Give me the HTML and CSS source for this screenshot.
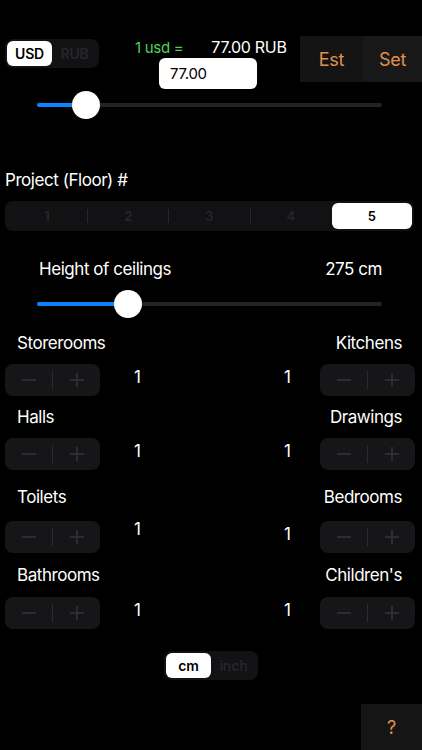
FILE: index.html
```html
<!DOCTYPE html>
<html lang="en">
<head>
    <meta charset="UTF-8">
    <meta name="viewport" content="width=device-width, initial-scale=1.0">
    <title>Repair Estimate</title>
    <link rel="stylesheet" href="styles.css">
</head>
<body>
    <div class="top">
        <div class="seg seg-cur">
            <div class="seg-item active">USD</div>
            <div class="seg-item">RUB</div>
        </div>
        <div class="rate">
            <div class="rate-line"><span class="rate-usd">1 usd =</span><span class="rate-rub">77.00 RUB</span></div>
            <div class="rate-input">77.00</div>
        </div>
        <div class="actions">
            <div class="act act-est">Est</div>
            <div class="act act-set">Set</div>
        </div>
    </div>

    <div class="slider slider-rate">
        <div class="track"><div class="fill" style="width: 49px"></div></div>
        <div class="thumb" style="left: 49px"></div>
    </div>

    <div class="floor-label">Project (Floor) #</div>
    <div class="seg seg-floor">
        <div class="seg-item">1</div>
        <div class="sep"></div>
        <div class="seg-item">2</div>
        <div class="sep"></div>
        <div class="seg-item">3</div>
        <div class="sep"></div>
        <div class="seg-item">4</div>
        <div class="sep sep-hidden"></div>
        <div class="seg-item active">5</div>
    </div>

    <div class="height-row">
        <span>Height of ceilings</span>
        <span>275 cm</span>
    </div>
    <div class="slider slider-height">
        <div class="track"><div class="fill" style="width: 91px"></div></div>
        <div class="thumb" style="left: 91px"></div>
    </div>

    <div class="rooms">
        <div class="room-labels r1"><span>Storerooms</span><span>Kitchens</span></div>
        <div class="room-ctrls c1">
            <div class="group">
                <div class="stepper"><div class="st-btn"><svg width="14" height="14"><line x1="0" y1="7" x2="14" y2="7"/></svg></div><div class="st-div"></div><div class="st-btn"><svg width="14" height="14"><line x1="0" y1="7" x2="14" y2="7"/><line x1="7" y1="0" x2="7" y2="14"/></svg></div></div>
                <div class="val val-l">1</div>
            </div>
            <div class="group">
                <div class="val val-r">1</div>
                <div class="stepper"><div class="st-btn"><svg width="14" height="14"><line x1="0" y1="7" x2="14" y2="7"/></svg></div><div class="st-div"></div><div class="st-btn"><svg width="14" height="14"><line x1="0" y1="7" x2="14" y2="7"/><line x1="7" y1="0" x2="7" y2="14"/></svg></div></div>
            </div>
        </div>

        <div class="room-labels r2"><span>Halls</span><span>Drawings</span></div>
        <div class="room-ctrls c2">
            <div class="group">
                <div class="stepper"><div class="st-btn"><svg width="14" height="14"><line x1="0" y1="7" x2="14" y2="7"/></svg></div><div class="st-div"></div><div class="st-btn"><svg width="14" height="14"><line x1="0" y1="7" x2="14" y2="7"/><line x1="7" y1="0" x2="7" y2="14"/></svg></div></div>
                <div class="val val-l">1</div>
            </div>
            <div class="group">
                <div class="val val-r">1</div>
                <div class="stepper"><div class="st-btn"><svg width="14" height="14"><line x1="0" y1="7" x2="14" y2="7"/></svg></div><div class="st-div"></div><div class="st-btn"><svg width="14" height="14"><line x1="0" y1="7" x2="14" y2="7"/><line x1="7" y1="0" x2="7" y2="14"/></svg></div></div>
            </div>
        </div>

        <div class="room-labels r3"><span>Toilets</span><span>Bedrooms</span></div>
        <div class="room-ctrls c3">
            <div class="group">
                <div class="stepper"><div class="st-btn"><svg width="14" height="14"><line x1="0" y1="7" x2="14" y2="7"/></svg></div><div class="st-div"></div><div class="st-btn"><svg width="14" height="14"><line x1="0" y1="7" x2="14" y2="7"/><line x1="7" y1="0" x2="7" y2="14"/></svg></div></div>
                <div class="val val-l val-high">1</div>
            </div>
            <div class="group">
                <div class="val val-r">1</div>
                <div class="stepper"><div class="st-btn"><svg width="14" height="14"><line x1="0" y1="7" x2="14" y2="7"/></svg></div><div class="st-div"></div><div class="st-btn"><svg width="14" height="14"><line x1="0" y1="7" x2="14" y2="7"/><line x1="7" y1="0" x2="7" y2="14"/></svg></div></div>
            </div>
        </div>

        <div class="room-labels r4"><span>Bathrooms</span><span>Children's</span></div>
        <div class="room-ctrls c4">
            <div class="group">
                <div class="stepper"><div class="st-btn"><svg width="14" height="14"><line x1="0" y1="7" x2="14" y2="7"/></svg></div><div class="st-div"></div><div class="st-btn"><svg width="14" height="14"><line x1="0" y1="7" x2="14" y2="7"/><line x1="7" y1="0" x2="7" y2="14"/></svg></div></div>
                <div class="val val-l">1</div>
            </div>
            <div class="group">
                <div class="val val-r">1</div>
                <div class="stepper"><div class="st-btn"><svg width="14" height="14"><line x1="0" y1="7" x2="14" y2="7"/></svg></div><div class="st-div"></div><div class="st-btn"><svg width="14" height="14"><line x1="0" y1="7" x2="14" y2="7"/><line x1="7" y1="0" x2="7" y2="14"/></svg></div></div>
            </div>
        </div>
    </div>

    <div class="seg seg-unit">
        <div class="seg-item active">cm</div>
        <div class="seg-item">inch</div>
    </div>

    <div class="help-row">
        <div class="help">?</div>
    </div>
</body>
</html>
```

FILE: styles.css
```css
body {
    margin: 0;
    background: #000;
    color: #fff;
    font-family: Inter, "Liberation Sans", sans-serif;
    height: 750px;
    overflow: hidden;
}

/* segmented controls */
.seg {
    display: flex;
    align-items: center;
    background: #121214;
    border-radius: 8px;
    padding: 2px;
    box-sizing: border-box;
}
.seg-item {
    flex: 1;
    height: 100%;
    display: flex;
    align-items: center;
    justify-content: center;
    font-size: 13px;
    font-weight: 600;
    color: #262628;
    border-radius: 6px;
}
.seg-item.active {
    background: #fff;
    color: #000;
}
.sep {
    width: 1px;
    height: 14px;
    background: #2a2a2c;
}
.sep-hidden {
    background: transparent;
}

/* top row */
.top {
    display: flex;
    padding-top: 36px;
    height: 53px;
}
.seg-cur {
    margin: 3px 0 0 5px;
    width: 94px;
    height: 29px;
}
.seg-cur .seg-item {
    font-size: 14px;
    letter-spacing: -0.2px;
}
.rate {
    width: 201px;
}
.rate-line {
    height: 22px;
    line-height: 22px;
    padding-left: 36px;
    white-space: nowrap;
}
.rate-usd {
    color: #4fd25c;
    font-size: 15px;
    letter-spacing: -0.3px;
}
.rate-rub {
    margin-left: 28px;
    font-size: 16px;
    letter-spacing: -0.3px;
}
.rate-input {
    margin-left: 60px;
    width: 98px;
    height: 31px;
    box-sizing: border-box;
    padding-left: 11px;
    line-height: 31px;
    background: #fff;
    color: #000;
    font-size: 15px;
    letter-spacing: -0.3px;
    border-radius: 6px;
}
.actions {
    display: flex;
    margin-left: auto;
    height: 46px;
}
.act {
    display: flex;
    align-items: center;
    justify-content: center;
    color: #e0914f;
    font-size: 18px;
    letter-spacing: -0.3px;
}
.act-est {
    width: 63px;
    background: #141414;
}
.act-set {
    width: 59px;
    background: #181818;
}

/* sliders */
.slider {
    position: relative;
    display: flex;
    align-items: center;
    height: 28px;
    margin: 0 40px 0 37px;
}
.slider-rate {
    margin-top: 2px;
}
.slider-height {
    margin-top: 10px;
}
.track {
    flex: 1;
    height: 4px;
    border-radius: 2px;
    background: #232325;
}
.fill {
    height: 4px;
    border-radius: 2px;
    background: #0a84ff;
}
.thumb {
    position: absolute;
    top: 0;
    width: 28px;
    height: 28px;
    margin-left: -14px;
    border-radius: 50%;
    background: #fff;
}

/* floor */
.floor-label {
    margin-top: 50px;
    padding-left: 5px;
    font-size: 17px;
    letter-spacing: -0.45px;
    line-height: 22px;
}
.seg-floor {
    margin: 10px 0 0 5px;
    width: 409px;
    height: 30px;
}

.height-row {
    display: flex;
    justify-content: space-between;
    margin-top: 27px;
    padding: 0 40px 0 39px;
    font-size: 17px;
    letter-spacing: -0.45px;
    line-height: 22px;
}

/* rooms */
.room-labels {
    display: flex;
    justify-content: space-between;
    padding: 0 20px 0 17px;
    font-size: 17px;
    letter-spacing: -0.45px;
    line-height: 22px;
}
.r1 { margin-top: 14px; }
.r2 { margin-top: 10px; }
.r3 { margin-top: 16px; }
.r4 { margin-top: 11px; }
.room-ctrls {
    display: flex;
    justify-content: space-between;
    padding: 0 7px 0 5px;
}
.c1, .c2 { margin-top: 10px; }
.c3 { margin-top: 13px; }
.c4 { margin-top: 11px; }
.group {
    display: flex;
}
.stepper {
    display: flex;
    align-items: center;
    width: 95px;
    height: 32px;
    background: #161618;
    border-radius: 8px;
}
.st-btn {
    flex: 1;
    display: flex;
    justify-content: center;
}
.st-btn svg {
    stroke: #363638;
    stroke-width: 1.5;
}
.st-div {
    width: 1px;
    height: 18px;
    background: #2c2c2e;
}
.val {
    align-self: flex-start;
    font-size: 17px;
    line-height: 26px;
}
.val-l {
    margin-left: 34px;
}
.val-r {
    margin-right: 29px;
}
.val-high {
    line-height: 16px;
}

.seg-unit {
    margin: 22px auto 0;
    width: 94px;
    height: 29px;
}
.seg-unit .seg-item {
    font-size: 14px;
    letter-spacing: -0.2px;
}

.help-row {
    display: flex;
    justify-content: flex-end;
    margin-top: 24px;
}
.help {
    width: 61px;
    height: 46px;
    display: flex;
    align-items: center;
    justify-content: center;
    background: #151515;
    color: #e0914f;
    font-size: 18px;
}
```
